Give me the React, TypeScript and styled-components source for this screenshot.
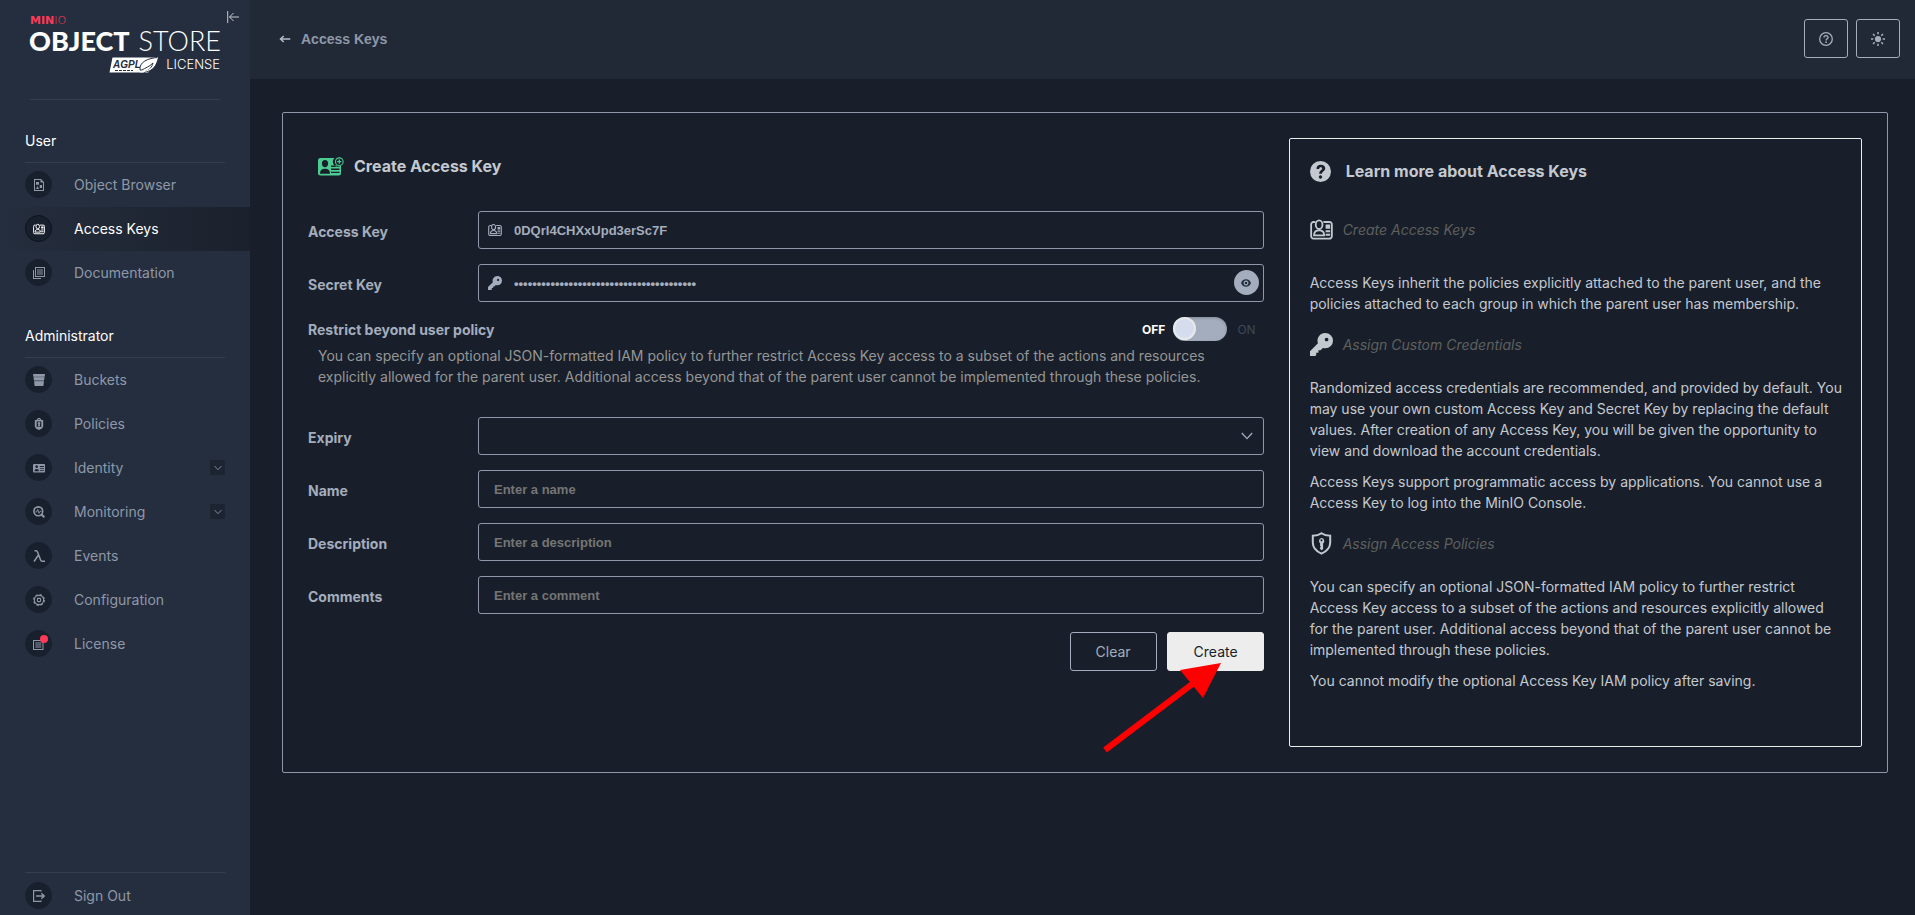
import React, { useState } from "react";
import styled, { createGlobalStyle } from "styled-components";

const GlobalStyle = createGlobalStyle`
  *, *::before, *::after { box-sizing: border-box; }
  body {
    margin: 0;
    background: #181f2a;
    color: #c4c9d0;
    font-family: Inter, "Liberation Sans", sans-serif;
    font-size: 14px;
    line-height: 21px;
  }
  a { color: inherit; text-decoration: none; }
  h1, h2, h3, p { margin: 0; }
`;

/* ---------- icons ---------- */

type IconProps = { size?: number };

const Icon = ({
  size = 12,
  width,
  box = "0 0 12 12",
  children,
}: IconProps & { width?: number; box?: string; children: React.ReactNode }) => (
  <svg width={width ?? size} height={size} viewBox={box} fill="currentColor" aria-hidden="true">
    {children}
  </svg>
);

const ObjectBrowserIcon = () => (
  <Icon>
    <path fillRule="evenodd" d="M1 0h7l3 3v9H1zM2 1v10h8V3.500H7.500V1z" />
    <path d="M3 3h3v2.800H3zM3 10l1.500-3L6 10zM6.700 6h2.300v3H6.700z" />
  </Icon>
);

const AccessKeyIcon = ({ size = 12 }: IconProps) => (
  <Icon size={size} box="0 0 24 24">
    <path
      d="M5.500 4.200H4A2.500 2.500 0 0 0 1.200 6.700v12A2.500 2.500 0 0 0 4 21.500h16a2.500 2.500 0 0 0 2.800-2.500v-12A2.500 2.500 0 0 0 20 4.200h-6"
      fill="none"
      stroke="currentColor"
      strokeWidth="1.900"
    />
    <ellipse cx="9.500" cy="7" rx="3.500" ry="4.500" fill="none" stroke="currentColor" strokeWidth="1.900" />
    <path d="M4.200 18.200c0-3.800 2-5.300 5.300-5.300s5.300 1.500 5.300 5.300z" fill="none" stroke="currentColor" strokeWidth="1.900" />
    <path d="M16.300 6.800H21v4.400h-4.700zM16.300 12.800H21v2h-4.700zM16.300 16.500H21v2h-4.700z" />
  </Icon>
);

const DocumentationIcon = () => (
  <Icon>
    <path fillRule="evenodd" d="M2 0h10v10H2zM3 1v8h8V1z" />
    <path d="M0 3h1v8h7v1H0zM4 2.500h6v1H4zM4 4.500h6v1H4zM4 6.500h6v1H4z" />
  </Icon>
);

const BucketIcon = () => (
  <Icon>
    <path d="M0 0h12l-.4 2.700H.4zM.600 3.300h10.800L11 6.300H1zM1.200 7.200h9.600L10.300 12H1.700z" />
    <path d="M.4 2.500h11.200L10.300 12H1.700z" opacity=".45" />
  </Icon>
);

const PolicyIcon = () => (
  <Icon>
    <path
      fillRule="evenodd"
      d="M4 1.800C4 .600 4.800 0 6 0s2 .600 2 1.800l2.200.500V8c0 2-2 3.200-4.200 4C3.800 11.200 1.800 10 1.800 8V2.300zM5 1.700h2C7 1.200 6.600.900 6 .900s-1 .300-1 .800zM3.700 3.500V9h4.600V3.500z"
    />
    <path d="M6 4a1.300 1.300 0 0 1 .700 2.400L7.300 8.500H4.700l.600-2.100A1.300 1.300 0 0 1 6 4z" />
  </Icon>
);

const IdentityIcon = () => (
  <Icon>
    <path
      fillRule="evenodd"
      d="M1 2h10a1 1 0 0 1 1 1v6.500a1 1 0 0 1-1 1H1a1 1 0 0 1-1-1V3a1 1 0 0 1 1-1zM3.700 3.200a1.400 1.400 0 1 0 .01 0zM1.500 9.200h4.400c0-1.500-.8-2.300-2.200-2.300s-2.200.8-2.200 2.300zM6.800 4v.900H11V4zM6.800 6v.700H11V6zM6.800 8v.700H11V8z"
    />
  </Icon>
);

const MonitoringIcon = () => (
  <Icon>
    <circle cx="5.300" cy="5.300" r="4.400" fill="none" stroke="currentColor" strokeWidth="1.600" />
    <path d="M2.300 6h1.300l1.100-2.600L6 7.300l.9-1.900h1.500" fill="none" stroke="currentColor" strokeWidth=".9" />
    <path d="M8.300 8.300L11.300 11.300" stroke="currentColor" strokeWidth="2" />
  </Icon>
);

const LambdaIcon = () => (
  <Icon>
    <path
      d="M1.500.800h1.600c.8 0 1.100.4 1.400 1.200l3 7.700c.4 1.100.8 1.500 1.600 1.500H12M5.500 5L1 11.500"
      fill="none"
      stroke="currentColor"
      strokeWidth="1.500"
    />
  </Icon>
);

const GearIcon = () => (
  <Icon>
    <circle cx="6" cy="6" r="4.600" fill="none" stroke="currentColor" strokeWidth="1.100" />
    <circle cx="6" cy="6" r="5.400" fill="none" stroke="currentColor" strokeWidth="1.100" strokeDasharray="2.400 1.840" />
    <rect x="4.400" y="4.400" width="3.200" height="3.200" rx=".8" fill="none" stroke="currentColor" strokeWidth="1.100" />
  </Icon>
);

const LicenseIcon = () => (
  <Icon>
    <path fillRule="evenodd" d="M0 2h10.500v10H0zM1 3v8h8.500V3z" />
    <path d="M2.300 4.500h6v1h-6zM2.300 6.500h6v1h-6zM2.300 8.500h6v1h-6z" />
  </Icon>
);

const SignOutIcon = () => (
  <Icon>
    <path d="M8 1.500V.600H.600v10.800H8v-.900" fill="none" stroke="currentColor" strokeWidth="1.200" />
    <path d="M3 6h8M8.300 3.300L11.200 6 8.300 8.700" fill="none" stroke="currentColor" strokeWidth="1.400" />
  </Icon>
);

const ChevronIcon = ({ size = 8 }: IconProps) => (
  <Icon size={size} box="0 0 12 12">
    <path d="M.8 3l5.200 5.600L11.200 3" fill="none" stroke="currentColor" strokeWidth="1.300" />
  </Icon>
);

const CollapseIcon = () => (
  <Icon size={12}>
    <path d="M.7 0v12M12 6H2.500M6.500 2L2.500 6l4 4" fill="none" stroke="currentColor" strokeWidth="1" />
  </Icon>
);

const BackIcon = () => (
  <Icon size={8} width={12} box="0 0 12 8">
    <path d="M11.300 4H1.500M4.700 1L1.500 4l3.200 3" fill="none" stroke="currentColor" strokeWidth="1.500" />
  </Icon>
);

const HelpOutlineIcon = () => (
  <Icon size={14} box="0 0 14 14">
    <circle cx="7" cy="7" r="6.300" fill="none" stroke="currentColor" strokeWidth="1.300" />
    <path d="M5 5.600C5 4.300 5.900 3.600 7 3.600s2 .7 2 1.800c0 1.400-1.900 1.400-1.900 3" fill="none" stroke="currentColor" strokeWidth="1.400" />
    <circle cx="7.100" cy="10.200" r=".9" />
  </Icon>
);

const SunIcon = () => (
  <Icon size={14} box="0 0 14 14">
    <circle cx="7" cy="7" r="3.100" />
    <path
      d="M7 0v2.300M7 11.700V14M0 7h2.300M11.700 7H14M2 2l1.700 1.700M10.300 10.300L12 12M12 2l-1.700 1.700M3.700 10.300L2 12"
      stroke="currentColor"
      strokeWidth="1.500"
    />
  </Icon>
);

const CreateKeyIcon = () => (
  <Icon size={19} width={26} box="0 0 26 19">
    <path
      fillRule="evenodd"
      d="M2.500 1H16.500a4.600 4.600 0 0 0 6.500 7.500V16.500a2 2 0 0 1-2 2H2.500A2.500 2.500 0 0 1 0 16V3.500A2.500 2.500 0 0 1 2.500 1zM7 3C5 3 3.900 4.300 3.900 6.500S5.200 10.300 7 10.300s3.100-1.600 3.100-3.800S9 3 7 3zM2 16.700h10c0-3.300-1.500-5-5-5s-5 1.700-5 5zM13 8.500v1.400h6V8.500zM13 11.600V13h8.500v-1.400zM13 14.700V16h8.500v-1.300z"
    />
    <circle cx="21.300" cy="4.700" r="3.800" fill="none" stroke="currentColor" strokeWidth="1.100" />
    <path d="M21.300 2.600v4.200M19.200 4.700h4.200" stroke="currentColor" strokeWidth="1.200" />
  </Icon>
);

const KeyIcon = ({ size = 14 }: IconProps) => (
  <Icon size={size} box="0 0 24 24">
    <path
      fillRule="evenodd"
      d="M16 0a8 8 0 0 1 8 8 8 8 0 0 1-8 8c-1 0-1.800-.1-2.500-.4L11 18H8.800v2.500H6.500V23l-1 1H0v-5l8.300-8.300A8 8 0 0 1 16 0zm1.300 4.900a1.900 1.900 0 1 0 .01 0z"
    />
  </Icon>
);

const EyeIcon = () => (
  <Icon size={8} width={10} box="0 0 10 8">
    <path fillRule="evenodd" d="M5 .3c2.500 0 4.200 1.500 5 3.700C9.200 6.200 7.500 7.700 5 7.700S.8 6.200 0 4C.8 1.800 2.500.3 5 .3zM5 1.600a2.400 2.400 0 1 0 .01 0z" />
    <circle cx="5" cy="4" r="1.300" />
  </Icon>
);

const HelpFilledIcon = () => (
  <Icon size={21} box="0 0 21 21">
    <path
      fillRule="evenodd"
      d="M10.500 0a10.500 10.500 0 1 1 0 21 10.500 10.500 0 0 1 0-21zM6.500 8h2.700c0-1.200.5-1.800 1.500-1.800s1.500.6 1.500 1.400c0 1.700-3 1.800-3 5.200h2.700c0-2.200 3.300-2.400 3.300-5.500 0-2.200-1.800-3.500-4.400-3.500S6.500 5.200 6.500 8zM10.500 14.300a1.700 1.700 0 1 0 .01 0z"
    />
  </Icon>
);

const ShieldIcon = () => (
  <Icon size={23} box="0 0 23 23">
    <path
      d="M11.500 1.300c2.500 1.800 5.400 2.500 8.700 2.500v6.700c0 5-3.200 8.700-8.700 11.200C6 19.200 2.800 15.500 2.800 10.500V3.800c3.300 0 6.200-.7 8.700-2.500z"
      fill="none"
      stroke="currentColor"
      strokeWidth="2"
    />
    <path fillRule="evenodd" d="M11.500 6a3 3 0 0 1 1.600 5.400V17l-1.300 1.200-1.700-1.200v-1.400l.8-.8-.8-.8v-2.700A3 3 0 0 1 11.500 6zm0 1.300a1 1 0 1 0 .01 0z" />
  </Icon>
);

/* ---------- sidebar ---------- */

const Page = styled.div`
  display: flex;
  min-height: 100vh;
`;

const Sidebar = styled.aside`
  position: sticky;
  top: 0;
  display: flex;
  flex-direction: column;
  flex: 0 0 250px;
  height: 100vh;
  overflow: hidden;
  background: #252e3e;
  color: #8e98a9;
`;

const Brand = styled.div`
  flex: none;
  height: 100px;
  margin: 0 30px;
  border-bottom: 1px solid #343e4e;
`;

const Logo = styled.svg`
  display: block;
  margin-top: 14px;
  overflow: visible;
`;

const CollapseButton = styled.button`
  position: absolute;
  top: 8px;
  right: 8px;
  display: flex;
  padding: 3px;
  border: 0;
  background: none;
  color: #c4c9d0;
  cursor: pointer;
`;

const NavGroup = styled.nav`
  flex: none;
  margin-top: 27px;
`;

const NavTitle = styled.h2`
  margin: 0 25px;
  height: 36px;
  padding-top: 3px;
  border-bottom: 1px solid #343e4e;
  color: #fff;
  font-size: 14px;
  font-weight: 400;
`;

const NavItem = styled.a<{ $active?: boolean }>`
  display: flex;
  align-items: center;
  gap: 22px;
  height: 44px;
  padding: 0 25px 1px;
  color: ${(p) => (p.$active ? "#fff" : "inherit")};
  background: ${(p) => (p.$active ? "linear-gradient(90deg, #252e3e 0%, #1b212c 100%)" : "none")};
`;

const NavIcon = styled.span<{ $active?: boolean }>`
  position: relative;
  display: flex;
  align-items: center;
  justify-content: center;
  width: 27px;
  height: 27px;
  border: 1px solid ${(p) => (p.$active ? "#0c121c" : "#181f2d")};
  border-radius: 50%;
  background: #181f2d;
`;

const Dot = styled.span`
  position: absolute;
  top: 4px;
  right: 3px;
  width: 8px;
  height: 8px;
  border-radius: 50%;
  background: #ff3958;
`;

const Expander = styled.span`
  display: flex;
  align-items: center;
  justify-content: center;
  width: 15px;
  height: 15px;
  margin-left: auto;
  border-radius: 2px;
  background: #1c2331;
`;

const SignOut = styled.div`
  flex: none;
  height: 43px;
  margin-top: auto;
  &::before {
    content: "";
    display: block;
    margin: 0 25px 1px;
    border-top: 1px solid #343e4e;
  }
`;

/* ---------- main area ---------- */

const Main = styled.main`
  flex: 1;
  min-width: 0;
`;

const Header = styled.header`
  display: flex;
  align-items: center;
  justify-content: space-between;
  height: 79px;
  padding: 0 15px 2px 29px;
  background: #222936;
`;

const BackLink = styled.a`
  display: flex;
  align-items: center;
  gap: 10px;
  color: #8e98a9;
  font: bold 14px/20px "Liberation Sans", Arial, sans-serif;
  svg { color: #b4bccb; }
`;

const HeaderActions = styled.div`
  display: flex;
  gap: 8px;
`;

const Button = styled.button<{ $primary?: boolean; $icon?: boolean }>`
  display: flex;
  align-items: center;
  justify-content: center;
  height: 39px;
  min-width: 44px;
  padding: ${(p) => (p.$icon ? "0 14px" : p.$primary ? "0 25px 0 26px" : "0 25px")};
  border: 1px solid ${(p) => (p.$primary ? "#ededed" : "#a4adbd")};
  border-radius: 3px;
  background: ${(p) => (p.$primary ? "#ededed" : "transparent")};
  color: ${(p) => (p.$primary ? "#181f2a" : "#a4adbd")};
  font: 400 14px/20px Inter, sans-serif;
  cursor: pointer;
`;

const Panel = styled.section`
  display: grid;
  grid-template-columns: minmax(0, 5fr) minmax(0, 3fr);
  gap: 25px;
  margin: 33px 27px 33px 32px;
  padding: 25px;
  border: 1px solid #8e98a9;
  border-radius: 2px;
`;

const Form = styled.form`
  display: flex;
  flex-direction: column;
  gap: 15px;
`;

const FormTitle = styled.h1`
  display: flex;
  align-items: center;
  gap: 10px;
  height: 58px;
  padding: 0 0 2px 10px;
  font-size: 16px;
  font-weight: 700;
  svg { color: #4ccb92; }
`;

const Row = styled.div`
  display: flex;
  align-items: center;
`;

const Label = styled.label`
  flex: 0 0 170px;
  padding-top: 2px;
  color: #a4adbd;
  font-weight: 700;
`;

const Field = styled.div`
  position: relative;
  flex: 1;
`;

const FieldIcon = styled.span<{ $end?: boolean }>`
  position: absolute;
  top: 0;
  ${(p) => (p.$end ? "right: 11px;" : "left: 10px;")}
  display: flex;
  align-items: center;
  height: 37px;
  color: #a4adbd;
  pointer-events: none;
`;

const controlStyle = `
  display: block;
  width: 100%;
  height: 38px;
  border: 1px solid #8e98a9;
  border-radius: 3px;
  background: transparent;
  color: #a4adbd;
  font: bold 13px/20px "Liberation Sans", Arial, sans-serif;
  outline: none;
`;

const TextInput = styled.input<{ $withIcon?: boolean }>`
  ${controlStyle}
  padding: 0 35px 0 ${(p) => (p.$withIcon ? "35px" : "15px")};
  &::placeholder { color: #757575; opacity: 1; }
`;

const Select = styled.select`
  ${controlStyle}
  appearance: none;
  padding: 0 35px 0 15px;
`;

const RevealButton = styled.button`
  position: absolute;
  top: 6px;
  right: 5px;
  display: flex;
  align-items: center;
  justify-content: center;
  width: 25px;
  height: 25px;
  padding: 0;
  border: 0;
  border-radius: 50%;
  background: #a4adbd;
  color: #252e3e;
  cursor: pointer;
`;

const PolicyBlock = styled.div`
  margin-bottom: 15px;
`;

const PolicyLabel = styled.label`
  flex: 1;
  padding-top: 1px;
  color: #a4adbd;
  font-weight: 700;
`;

const ToggleText = styled.span<{ $on?: boolean }>`
  color: ${(p) => (p.$on ? "#fff" : "#3f4958")};
  font-size: 12px;
  font-weight: ${(p) => (p.$on ? 700 : 400)};
`;

const Toggle = styled.input`
  appearance: none;
  width: 54px;
  height: 24px;
  margin: 0 10px 0 8px;
  border-radius: 12px;
  background: #a4adbd;
  box-shadow: inset 0 1px 3px #0003;
  cursor: pointer;
  &::before {
    content: "";
    display: block;
    width: 23px;
    height: 23px;
    border: 2px solid #e6eaeb;
    border-radius: 50%;
    background: #d5dcee;
  }
  &:checked::before { margin-left: 31px; }
`;

const PolicyText = styled.p`
  padding: 4px 40px 0 10px;
  color: #969696;
`;

const ToggleGroup = styled.div`
  display: flex;
  align-items: center;
  height: 24px;
  padding-right: 8px;
`;

const Actions = styled.div`
  display: flex;
  justify-content: flex-end;
  gap: 10px;
  padding-top: 3px;
`;

const CreateSlot = styled.div`
  position: relative;
`;

const Arrow = styled.svg`
  position: absolute;
  top: 28px;
  right: 39px;
  pointer-events: none;
`;

/* ---------- help ---------- */

const Help = styled.aside`
  padding: 20px 15px 55px 20px;
  border: 1px solid #ededed;
  border-radius: 2px;
`;

const HelpTitle = styled.h2`
  display: flex;
  align-items: center;
  gap: 15px;
  height: 24px;
  margin-bottom: 16px;
  font-size: 16px;
  font-weight: 700;
`;

const HelpTopic = styled.h3<{ $first?: boolean }>`
  display: flex;
  align-items: center;
  gap: 10px;
  height: 63px;
  margin-bottom: ${(p) => (p.$first ? "10px" : "0")};
  padding-bottom: 2px;
  font-size: 14px;
  font-style: italic;
  font-weight: 400;
  span { color: #5f5f5f; }
`;

const HelpText = styled.p`
  & + & { margin-top: 10px; }
`;

const userItems = [
  { label: "Object Browser", icon: <ObjectBrowserIcon /> },
  { label: "Access Keys", icon: <AccessKeyIcon />, active: true },
  { label: "Documentation", icon: <DocumentationIcon /> },
];

const adminItems = [
  { label: "Buckets", icon: <BucketIcon /> },
  { label: "Policies", icon: <PolicyIcon /> },
  { label: "Identity", icon: <IdentityIcon />, expandable: true },
  { label: "Monitoring", icon: <MonitoringIcon />, expandable: true },
  { label: "Events", icon: <LambdaIcon /> },
  { label: "Configuration", icon: <GearIcon /> },
  { label: "License", icon: <LicenseIcon />, dot: true },
];

type Item = {
  label: string;
  icon: React.ReactNode;
  active?: boolean;
  expandable?: boolean;
  dot?: boolean;
};

const NavLink = ({ label, icon, active, expandable, dot }: Item) => (
  <NavItem href="#" $active={active} aria-current={active ? "page" : undefined}>
    <NavIcon $active={active}>
      {icon}
      {dot && <Dot />}
    </NavIcon>
    {label}
    {expandable && (
      <Expander>
        <ChevronIcon />
      </Expander>
    )}
  </NavItem>
);

const textFields = [
  { id: "name", label: "Name", placeholder: "Enter a name" },
  { id: "description", label: "Description", placeholder: "Enter a description" },
  { id: "comments", label: "Comments", placeholder: "Enter a comment" },
];

export default function App() {
  const [visible, setVisible] = useState(false);
  const [restricted, setRestricted] = useState(false);

  return (
    <>
      <GlobalStyle />
      <Page>
        <Sidebar>
          <Brand>
            <Logo width="190" height="62" viewBox="0 0 190 62" role="img" aria-label="MinIO Object Store, AGPL license">
              <text x="0" y="10" fill="#ff3958" fontFamily="DejaVu Sans" fontSize="11" fontWeight="700">
                MIN<tspan fontWeight="200">IO</tspan>
              </text>
              <text x="-1" y="37" fill="#fff" fontFamily="Lato" fontSize="27" fontWeight="900">
                OBJECT
              </text>
              <text x="191" y="37" fill="#fff" fontFamily="Lato" fontSize="27" fontWeight="300" textAnchor="end">
                STORE
              </text>
              <path d="M82.500 43.500H127c-2 6-5 11-9 15H79.500z" fill="#fff" />
              <text x="83" y="54" fill="#252e3e" fontFamily="Liberation Sans" fontSize="10" fontStyle="italic" fontWeight="700">
                AGPL
              </text>
              <path d="M85 56.500h18" stroke="#252e3e" strokeWidth="1" strokeDasharray="3 1" />
              <path d="M110 56c-1-8 8-12 18-12.500-1 8-5 14-14 14.500 6-2 8-5 9-9-4 4-8 5-11 7z" fill="#fff" stroke="#252e3e" strokeWidth="1" />
              <path d="M110 58c8 0 15-4 17.500-14.500" fill="none" stroke="#fff" strokeWidth="1" />
              <text x="190" y="55" fill="#fff" fontFamily="Inter" fontSize="13" fontWeight="300" textAnchor="end">
                LICENSE
              </text>
            </Logo>
          </Brand>
          <CollapseButton type="button" aria-label="Collapse menu">
            <CollapseIcon />
          </CollapseButton>
          <NavGroup aria-label="User">
            <NavTitle>User</NavTitle>
            {userItems.map((item) => (
              <NavLink key={item.label} {...item} />
            ))}
          </NavGroup>
          <NavGroup aria-label="Administrator">
            <NavTitle>Administrator</NavTitle>
            {adminItems.map((item) => (
              <NavLink key={item.label} {...item} />
            ))}
          </NavGroup>
          <SignOut>
            <NavLink label="Sign Out" icon={<SignOutIcon />} />
          </SignOut>
        </Sidebar>

        <Main>
          <Header>
            <BackLink href="#">
              <BackIcon />
              Access Keys
            </BackLink>
            <HeaderActions>
              <Button $icon type="button" aria-label="Help">
                <HelpOutlineIcon />
              </Button>
              <Button $icon type="button" aria-label="Toggle theme">
                <SunIcon />
              </Button>
            </HeaderActions>
          </Header>

          <Panel>
            <Form onSubmit={(e) => e.preventDefault()}>
              <FormTitle>
                <CreateKeyIcon />
                Create Access Key
              </FormTitle>
              <Row>
                <Label htmlFor="access-key">Access Key</Label>
                <Field>
                  <FieldIcon>
                    <AccessKeyIcon size={14} />
                  </FieldIcon>
                  <TextInput id="access-key" $withIcon defaultValue="0DQrI4CHXxUpd3erSc7F" />
                </Field>
              </Row>
              <Row>
                <Label htmlFor="secret-key">Secret Key</Label>
                <Field>
                  <FieldIcon>
                    <KeyIcon size={14} />
                  </FieldIcon>
                  <TextInput
                    id="secret-key"
                    $withIcon
                    type={visible ? "text" : "password"}
                    defaultValue="mN4vXc7Qp2Lr9TzWk6Hy3Bf8Jd5Gs1Ra0EuYtPiO"
                  />
                  <RevealButton type="button" aria-label="Show secret key" onClick={() => setVisible(!visible)}>
                    <EyeIcon />
                  </RevealButton>
                </Field>
              </Row>
              <PolicyBlock>
                <Row>
                  <PolicyLabel htmlFor="restrict">Restrict beyond user policy</PolicyLabel>
                  <ToggleGroup>
                    <ToggleText $on={!restricted}>OFF</ToggleText>
                    <Toggle
                      id="restrict"
                      type="checkbox"
                      checked={restricted}
                      onChange={(e) => setRestricted(e.target.checked)}
                    />
                    <ToggleText $on={restricted}>ON</ToggleText>
                  </ToggleGroup>
                </Row>
                <PolicyText>
                  You can specify an optional JSON-formatted IAM policy to further restrict Access Key access to a subset
                  of the actions and resources explicitly allowed for the parent user. Additional access beyond that of
                  the parent user cannot be implemented through these policies.
                </PolicyText>
              </PolicyBlock>
              <Row>
                <Label htmlFor="expiry">Expiry</Label>
                <Field>
                  <Select id="expiry" defaultValue="">
                    <option value="" />
                  </Select>
                  <FieldIcon $end>
                    <ChevronIcon size={12} />
                  </FieldIcon>
                </Field>
              </Row>
              {textFields.map((f) => (
                <Row key={f.id}>
                  <Label htmlFor={f.id}>{f.label}</Label>
                  <Field>
                    <TextInput id={f.id} placeholder={f.placeholder} />
                  </Field>
                </Row>
              ))}
              <Actions>
                <Button type="reset">Clear</Button>
                <CreateSlot>
                  <Button $primary type="submit">
                    Create
                  </Button>
                  <Arrow width="125" height="95" viewBox="0 0 125 95" aria-hidden="true">
                    <path d="M5 90L95 22" stroke="#f00" strokeWidth="6" />
                    <path d="M121 3L80 10l23 28z" fill="#f00" />
                  </Arrow>
                </CreateSlot>
              </Actions>
            </Form>

            <Help>
              <HelpTitle>
                <HelpFilledIcon />
                Learn more about Access Keys
              </HelpTitle>
              <HelpTopic $first>
                <AccessKeyIcon size={23} />
                <span>Create Access Keys</span>
              </HelpTopic>
              <HelpText>
                Access Keys inherit the policies explicitly attached to the parent user, and the policies attached to
                each group in which the parent user has membership.
              </HelpText>
              <HelpTopic>
                <KeyIcon size={23} />
                <span>Assign Custom Credentials</span>
              </HelpTopic>
              <HelpText>
                Randomized access credentials are recommended, and provided by default. You may use your own custom
                Access Key and Secret Key by replacing the default values. After creation of any Access Key, you will
                be given the opportunity to view and download the account credentials.
              </HelpText>
              <HelpText>
                Access Keys support programmatic access by applications. You cannot use a Access Key to log into the
                MinIO Console.
              </HelpText>
              <HelpTopic>
                <ShieldIcon />
                <span>Assign Access Policies</span>
              </HelpTopic>
              <HelpText>
                You can specify an optional JSON-formatted IAM policy to further restrict Access Key access to a subset
                of the actions and resources explicitly allowed for the parent user. Additional access beyond that of
                the parent user cannot be implemented through these policies.
              </HelpText>
              <HelpText>You cannot modify the optional Access Key IAM policy after saving.</HelpText>
            </Help>
          </Panel>
        </Main>
      </Page>
    </>
  );
}
